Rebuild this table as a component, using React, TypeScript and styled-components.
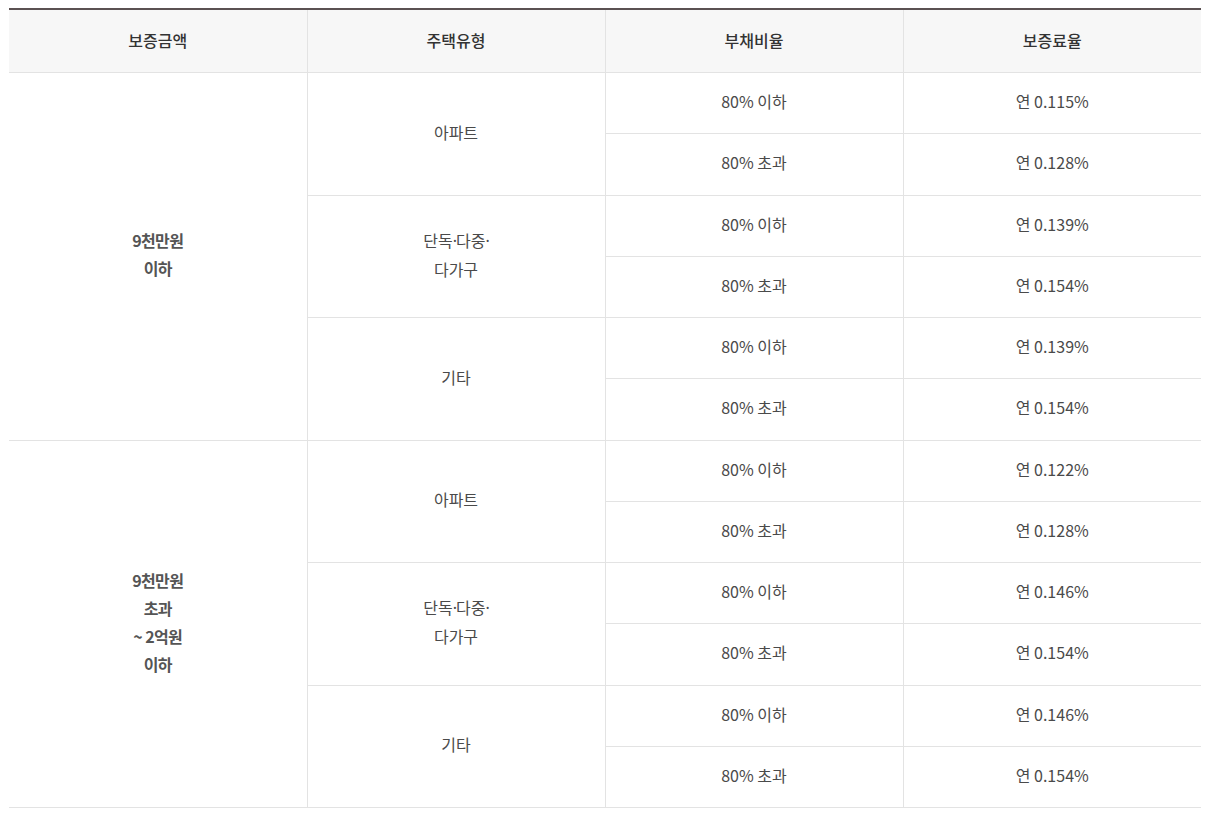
import React from 'react';
import styled, { createGlobalStyle } from 'styled-components';

const GlobalStyle = createGlobalStyle`
  body {
    margin: 0;
    padding: 8px 4px 0 9px;
    background: #fff;
    font-family: "Noto Sans CJK KR", "Noto Sans", sans-serif;
  }
`;

const Table = styled.table`
  width: 1192px;
  border-collapse: collapse;
  border-top: 2px solid #5b5152;
  table-layout: fixed;
  color: #4a4a4a;
  font-size: 16px;
  letter-spacing: 0;
`;

const Th = styled.th<{ $first?: boolean }>`
  height: 60px;
  padding: 0 0 2px;
  background: #f7f7f7;
  border-bottom: 1px solid #e3e3e3;
  border-left: ${({ $first }) => ($first ? 'none' : '1px solid #e3e3e3')};
  font-weight: 500;
  color: #333;
  text-align: center;
`;

const Td = styled.td<{ $strong?: boolean; $first?: boolean }>`
  height: 56.25px;
  padding: 0 10px 4px;
  border-bottom: 1px solid #e3e3e3;
  border-left: ${({ $first }) => ($first ? 'none' : '1px solid #e3e3e3')};
  text-align: center;
  vertical-align: middle;
  line-height: 28px;
  font-weight: ${({ $strong }) => ($strong ? 700 : 400)};
  color: ${({ $strong }) => ($strong ? '#555' : '#4a4a4a')};
  letter-spacing: ${({ $strong }) => ($strong ? '-0.6px' : '0')};
`;

const Dot = styled.span`
  font-family: "Noto Sans", sans-serif;
  letter-spacing: -1px;
`;

interface HouseGroup {
  type: string[];
  rates: [string, string];
}

interface AmountGroup {
  amount: string[];
  houses: HouseGroup[];
}

const data: AmountGroup[] = [
  {
    amount: ['9천만원', '이하'],
    houses: [
      { type: ['아파트'], rates: ['0.115', '0.128'] },
      { type: ['단독·다중·', '다가구'], rates: ['0.139', '0.154'] },
      { type: ['기타'], rates: ['0.139', '0.154'] },
    ],
  },
  {
    amount: ['9천만원', '초과', '~ 2억원', '이하'],
    houses: [
      { type: ['아파트'], rates: ['0.122', '0.128'] },
      { type: ['단독·다중·', '다가구'], rates: ['0.146', '0.154'] },
      { type: ['기타'], rates: ['0.146', '0.154'] },
    ],
  },
];

const withDots = (text: string) =>
  text.split('·').map((part, i) => (
    <React.Fragment key={i}>
      {i > 0 && <Dot>·</Dot>}
      {part}
    </React.Fragment>
  ));

const lines = (parts: string[]) =>
  parts.map((p, i) => (
    <React.Fragment key={i}>
      {i > 0 && <br />}
      {withDots(p)}
    </React.Fragment>
  ));

export default function App() {
  return (
    <>
      <GlobalStyle />
      <Table>
        <thead>
          <tr>
            <Th $first>보증금액</Th>
            <Th>주택유형</Th>
            <Th>부채비율</Th>
            <Th>보증료율</Th>
          </tr>
        </thead>
        <tbody>
          {data.map((group, gi) =>
            group.houses.map((house, hi) =>
              house.rates.map((rate, ri) => (
                <tr key={`${gi}-${hi}-${ri}`}>
                  {hi === 0 && ri === 0 && (
                    <Td $strong $first rowSpan={group.houses.length * 2}>
                      {lines(group.amount)}
                    </Td>
                  )}
                  {ri === 0 && <Td rowSpan={2}>{lines(house.type)}</Td>}
                  <Td>{ri === 0 ? '80% 이하' : '80% 초과'}</Td>
                  <Td>연 {rate}%</Td>
                </tr>
              ))
            )
          )}
        </tbody>
      </Table>
    </>
  );
}
